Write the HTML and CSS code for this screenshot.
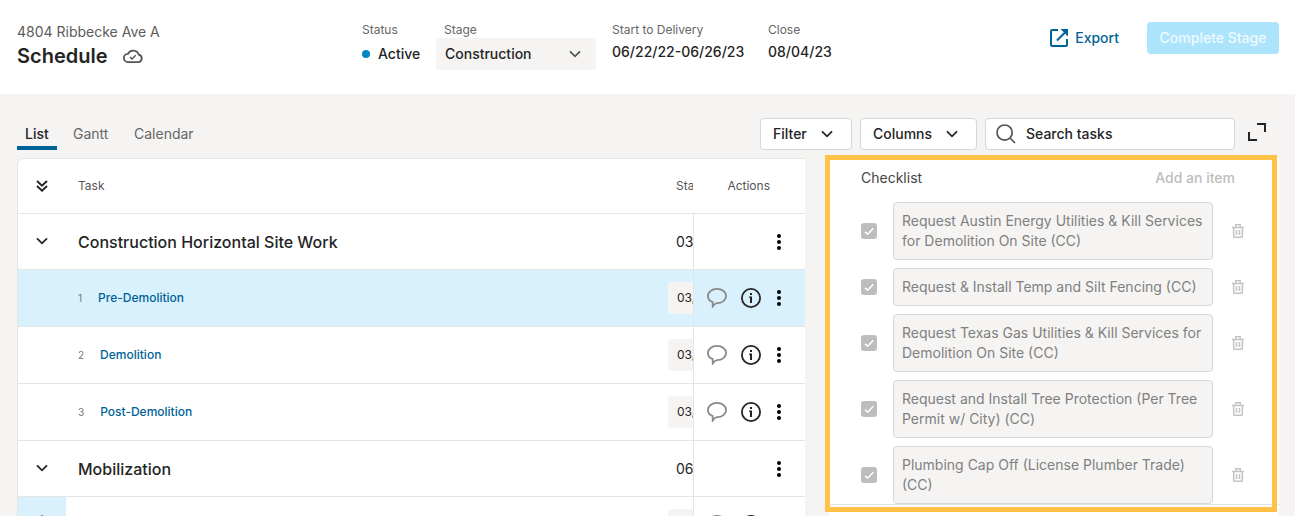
FILE: index.html
```html
<!DOCTYPE html>
<html lang="en">
<head>
  <meta charset="UTF-8">
  <title>Schedule - 4804 Ribbecke Ave A</title>
  <link rel="stylesheet" href="styles.css">
</head>
<body>
  <!-- shared icons -->
  <svg class="sprite">
    <symbol id="chevron" viewBox="0 0 12 8"><path d="M1 1.3 6 6.3 11 1.3" fill="none" stroke="currentColor" stroke-width="1.8"/></symbol>
    <symbol id="chat" viewBox="0 0 20 20"><path d="M10 .9C4.9.9.9 4 .9 8c0 2.8 1.9 5 4.8 6.2v4.2c1.1-1.7 2.4-2.9 4.3-3.2C15.1 15.2 19.1 12 19.1 8S15.1.9 10 .9z" fill="none" stroke="currentColor" stroke-width="1.8"/></symbol>
    <symbol id="info" viewBox="0 0 20 20"><circle cx="10" cy="10" r="9.1" fill="none" stroke="currentColor" stroke-width="1.8"/><path d="M9 5h2v2H9zM8.2 8.5H11V15H9v-5h-.8z" fill="currentColor"/></symbol>
    <symbol id="dots" viewBox="0 0 4 16"><circle cx="2" cy="2" r="2"/><circle cx="2" cy="8" r="2"/><circle cx="2" cy="14" r="2"/></symbol>
    <symbol id="trash" viewBox="0 0 12 14"><path d="M0 3.5h12M3.7 3V.8h4.6V3M1.7 3.500v9.100q0 .7.700.7h7.200q.7 0 .7-.7V3.500M4.500 6v5M7.500 6v5" fill="none" stroke="currentColor" stroke-width="1.500"/></symbol>
    <symbol id="check" viewBox="0 0 16 16"><path d="M4 8.7 6.6 11.2 12.3 5.3" fill="none" stroke="#fff" stroke-width="1.5"/></symbol>
  </svg>

  <header class="header">
    <div class="title-block">
      <div class="address">4804 Ribbecke Ave A</div>
      <h1>Schedule
        <svg class="cloud" viewBox="0 0 20 14"><path d="M5 13.100h10.200a3.800 3.800 0 0 0 .5-7.500A5.800 5.800 0 0 0 4.900 4.900 4.100 4.100 0 0 0 5 13.100z" fill="none" stroke="currentColor" stroke-width="1.800"/><path d="M7 8 9 10 12.700 6.200" fill="none" stroke="currentColor" stroke-width="1.400"/></svg>
      </h1>
    </div>
    <div class="info status">
      <label>Status</label>
      <div class="value"><span class="dot"></span>Active</div>
    </div>
    <div class="info stage">
      <label>Stage</label>
      <div class="select">Construction <svg class="chevron"><use href="#chevron"/></svg></div>
    </div>
    <div class="info dates">
      <label>Start to Delivery</label>
      <div class="value">06/22/22-06/26/23</div>
    </div>
    <div class="info close">
      <label>Close</label>
      <div class="value">08/04/23</div>
    </div>
    <a class="export">
      <svg viewBox="0 0 18 18"><path d="M8 1H2.200Q1 1 1 2.200v13.600Q1 17 2.200 17h13.600q1.200 0 1.200-1.200V10M7 11.500 15 3.500" fill="none" stroke="currentColor" stroke-width="2"/><path d="M10.500 0H18v7.500z" fill="currentColor"/></svg>
      Export
    </a>
    <button class="complete">Complete Stage</button>
  </header>

  <nav class="toolbar">
    <div class="tabs">
      <a class="tab active">List</a>
      <a class="tab gantt">Gantt</a>
      <a class="tab">Calendar</a>
    </div>
    <div class="box filter">Filter <svg class="chevron"><use href="#chevron"/></svg></div>
    <div class="box columns">Columns <svg class="chevron"><use href="#chevron"/></svg></div>
    <div class="box search">
      <svg viewBox="0 0 20 20"><circle cx="8.600" cy="8.600" r="7.600" fill="none" stroke="currentColor" stroke-width="1.700"/><path d="m14 14 5 5" stroke="currentColor" stroke-width="1.700"/></svg>
      Search tasks
    </div>
    <svg class="expand" viewBox="0 0 18 18"><path d="M9 1h8v8M1 9v8h8" fill="none" stroke="currentColor" stroke-width="2"/></svg>
  </nav>

  <main class="content">
    <section class="table">
      <div class="row head">
        <div class="toggle"><svg class="double" viewBox="0 0 12 12"><path d="M1 1 6 5.600 11 1M1 6 6 10.600 11 6" fill="none" stroke="currentColor" stroke-width="1.900"/></svg></div>
        <div class="name">Task</div>
        <div class="start">Start</div>
        <div class="actions">Actions</div>
      </div>
      <div class="row group">
        <div class="toggle"><svg class="chevron"><use href="#chevron"/></svg></div>
        <div class="name">Construction Horizontal Site Work</div>
        <div class="start">03/01/23</div>
        <div class="actions"><svg class="dots"><use href="#dots"/></svg></div>
      </div>
      <div class="row task selected">
        <div class="toggle"></div>
        <div class="name"><span class="num">1</span><a>Pre-Demolition</a></div>
        <div class="start"><span class="pill">03/01/23</span></div>
        <div class="actions"><svg class="chat"><use href="#chat"/></svg><svg class="about"><use href="#info"/></svg><svg class="dots"><use href="#dots"/></svg></div>
      </div>
      <div class="row task">
        <div class="toggle"></div>
        <div class="name"><span class="num">2</span><a>Demolition</a></div>
        <div class="start"><span class="pill">03/01/23</span></div>
        <div class="actions"><svg class="chat"><use href="#chat"/></svg><svg class="about"><use href="#info"/></svg><svg class="dots"><use href="#dots"/></svg></div>
      </div>
      <div class="row task">
        <div class="toggle"></div>
        <div class="name"><span class="num">3</span><a>Post-Demolition</a></div>
        <div class="start"><span class="pill">03/01/23</span></div>
        <div class="actions"><svg class="chat"><use href="#chat"/></svg><svg class="about"><use href="#info"/></svg><svg class="dots"><use href="#dots"/></svg></div>
      </div>
      <div class="row group">
        <div class="toggle"><svg class="chevron"><use href="#chevron"/></svg></div>
        <div class="name">Mobilization</div>
        <div class="start">06/01/23</div>
        <div class="actions"><svg class="dots"><use href="#dots"/></svg></div>
      </div>
      <div class="row task">
        <div class="toggle marked"><svg class="arrows" viewBox="0 0 12 20"><path d="M6 0v20M2 5l4-4 4 4M2 15l4 4 4-4" fill="none" stroke="currentColor" stroke-width="1.500"/></svg></div>
        <div class="name"></div>
        <div class="start"><span class="pill"></span></div>
        <div class="actions"><svg class="chat"><use href="#chat"/></svg><svg class="about"><use href="#info"/></svg><svg class="dots"><use href="#dots"/></svg></div>
      </div>
    </section>

    <aside class="panel">
      <div class="checklist">
        <div class="checklist-head"><h2>Checklist</h2><span class="add">Add an item</span></div>
        <div class="item">
          <svg class="checkbox"><use href="#check"/></svg>
          <div class="text">Request Austin Energy Utilities &amp; Kill Services for Demolition On Site (CC)</div>
          <svg class="trash"><use href="#trash"/></svg>
        </div>
        <div class="item">
          <svg class="checkbox"><use href="#check"/></svg>
          <div class="text">Request &amp; Install Temp and Silt Fencing (CC)</div>
          <svg class="trash"><use href="#trash"/></svg>
        </div>
        <div class="item">
          <svg class="checkbox"><use href="#check"/></svg>
          <div class="text">Request Texas Gas Utilities &amp; Kill Services for Demolition On Site (CC)</div>
          <svg class="trash"><use href="#trash"/></svg>
        </div>
        <div class="item">
          <svg class="checkbox"><use href="#check"/></svg>
          <div class="text">Request and Install Tree Protection (Per Tree Permit w/ City) (CC)</div>
          <svg class="trash"><use href="#trash"/></svg>
        </div>
        <div class="item">
          <svg class="checkbox"><use href="#check"/></svg>
          <div class="text">Plumbing Cap Off (License Plumber Trade) (CC)</div>
          <svg class="trash"><use href="#trash"/></svg>
        </div>
      </div>
      <div class="highlight"></div>
    </aside>
  </main>
</body>
</html>
```

FILE: styles.css
```css
* { box-sizing: border-box; }
body { margin: 0; height: 516px; overflow: hidden; display: flex; flex-direction: column; background: #f5f4f2; color: #242424; font: 14px/20px Inter, sans-serif; }
h1, h2 { margin: 0; }
svg { flex: none; display: block; }
.sprite { display: none; }
.chevron { width: 12px; height: 8px; }

/* header */
.header { flex: none; height: 94px; background: #fff; display: flex; padding: 22px 16px 0 17px; }
.title-block { width: 345px; color: #5c5c5c; }
.title-block h1 { display: flex; align-items: center; gap: 15px; font-size: 20px; line-height: 28px; font-weight: 600; color: #242424; }
.cloud { width: 20px; height: 14px; color: #555; }
.info label { display: block; font-size: 12px; line-height: 16px; color: #666; }
.value { font-weight: 500; line-height: 20px; margin-top: 4px; }
.status { width: 74px; }
.status .value { display: flex; align-items: center; gap: 8px; margin-top: 6px; }
.dot { width: 8px; height: 8px; border-radius: 50%; background: #0086c0; }
.stage { width: 160px; margin-right: 16px; }
.stage label { padding-left: 8px; }
.select { display: flex; align-items: center; justify-content: space-between; height: 32px; padding: 0 15px 0 9px; background: #f5f4f2; border-radius: 4px; font-weight: 500; }
.select .chevron { color: #555; }
.dates { width: 156px; }
.export { margin-left: auto; display: flex; align-items: center; gap: 7px; height: 32px; color: #006298; font-weight: 500; margin-right: 28px; }
.export svg { width: 18px; height: 18px; }
.complete { width: 132px; height: 32px; padding: 0 0 1px; border: 0; border-radius: 4px; background: #ace4fb; color: #effaff; font: 500 14px/20px Inter, sans-serif; }

/* tabs and filters */
.toolbar { flex: none; display: flex; height: 64px; padding: 24px 29px 8px 17px; gap: 8px; }
.tabs { display: flex; gap: 8px; margin-right: auto; }
.tab { padding: 6px 8px 0; color: #666; height: 32px; }
.tab.active { width: 40px; color: #242424; font-weight: 500; border-bottom: 4px solid #006298; }
.tab.gantt { width: 53px; }
.box { display: flex; align-items: center; justify-content: space-between; height: 32px; padding: 0 18px 0 12px; border: 1px solid #d6d6d6; border-radius: 4px; background: #fff; font-weight: 500; }
.filter { width: 92px; }
.columns { width: 117px; }
.search { width: 250px; justify-content: flex-start; gap: 10px; padding-left: 10px; }
.search svg { width: 20px; height: 20px; color: #555; }
.expand { width: 18px; height: 18px; margin: 5px 0 0 5px; }

/* task table */
.content { flex: 1; display: flex; min-height: 0; }
.table { width: 788px; margin-left: 17px; border: 1px solid #e5e5e5; border-width: 1px 0 0 1px; border-radius: 6px 0 0 0; background: #fff; overflow: hidden; }
.row { display: grid; grid-template-columns: 48px 598px 29px 112px; height: 56px; border-bottom: 1px solid #e5e5e5; }
.row > div { display: flex; align-items: center; min-width: 0; }
.row .toggle { justify-content: center; }
.row .name { padding-left: 12px; }
.row .start { overflow: hidden; padding-left: 12px; white-space: nowrap; }
.row .actions { border-left: 1px solid #e5e5e5; justify-content: flex-end; padding-right: 24px; }
.head { height: 55px; font-size: 12px; color: #555; }
.row.head .actions { border-left: 0; padding-right: 35px; }
.double { width: 12px; height: 12px; color: #242424; }
.group .toggle { padding-bottom: 2px; }
.group .name { font-size: 16px; font-weight: 500; }
.group .actions { padding-top: 1px; }
.task { height: 57px; }
.selected { background: #d9f1fd; }
.marked { background: #d9f1fd; color: #52707f; }
.arrows { width: 12px; height: 20px; }
.task .name { font-size: 12px; font-weight: 500; color: #006298; }
.num { font-size: 10px; font-weight: 400; color: #777; margin-right: 16px; }
.row.task .start { padding-left: 4px; }
.pill { flex: none; width: 96px; height: 32px; padding: 6px 9px; background: #f5f4f2; border-radius: 4px; font-size: 12px; }
.dots { width: 4px; height: 16px; }
.chat { width: 20px; height: 20px; color: #888; margin-right: 14px; }
.about { width: 20px; height: 20px; margin-right: 16px; }

/* checklist panel */
.panel { position: relative; width: 450px; margin-left: 24px; background: #fff; }
.checklist { height: 347px; padding: 10px 35px 0 32px; border-bottom: 1px solid #e5e5e5; }
.checklist-head { display: flex; justify-content: space-between; padding-right: 9px; margin-bottom: 14px; }
.checklist-head h2 { font-size: 14px; font-weight: 400; color: #444; }
.add { color: #bdbdbd; font-weight: 500; }
.item { display: flex; align-items: center; margin-bottom: 8px; }
.checkbox { width: 16px; height: 16px; margin-right: 16px; background: #bdbdbd; border-radius: 3px; }
.text { width: 320px; padding: 8px; border: 1px solid #d6d6d6; border-radius: 4px; background: #f5f4f2; color: #808080; }
.trash { width: 12px; height: 14px; margin-left: 19px; color: #c4c4c4; }
.highlight { position: absolute; left: -4px; top: -3px; width: 452px; height: 357px; border: 5px solid #ffc247; }
```
